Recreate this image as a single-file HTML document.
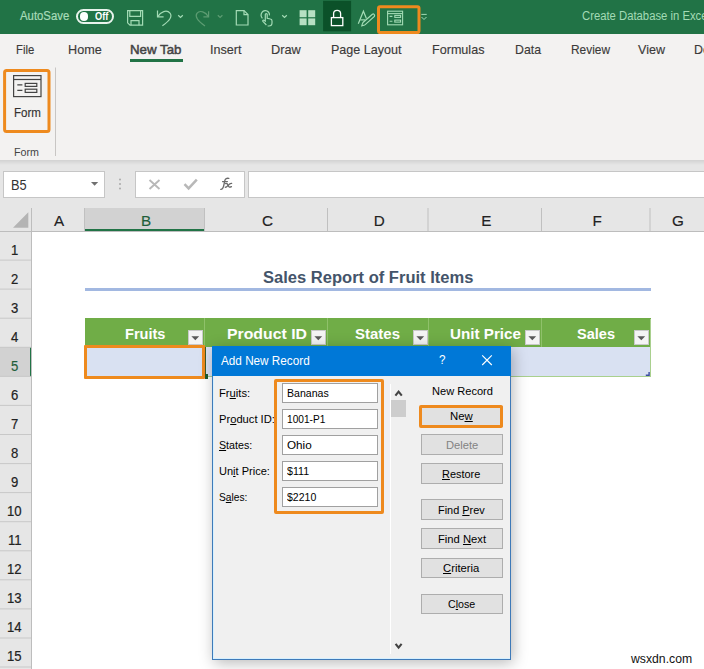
<!DOCTYPE html>
<html><head><meta charset="utf-8">
<style>
html,body{margin:0;padding:0;width:704px;height:669px;overflow:hidden;background:#fff}
body{position:relative;font-family:"Liberation Sans",sans-serif}
.r{position:absolute}
.t{position:absolute;white-space:nowrap;line-height:0;transform-origin:0 0}
u{text-decoration:underline;text-underline-offset:1px}
</style></head><body>
<div class="r" style="left:0px;top:0px;width:704px;height:34px;background:#217346"></div>
<div class="t" style="left:19.50px;top:16.27px;font-size:12.500px;color:#a8dcb9;font-weight:normal;transform:scaleX(0.9077);-webkit-text-stroke:0.2px #a8dcb9;">AutoSave</div>
<div class="r" style="left:76.2px;top:8.5px;width:34.1px;height:11.6px;border:2px solid #e8f3ec;border-radius:8px"></div>
<div class="r" style="left:79.6px;top:11.8px;width:8.8px;height:8.8px;background:#fff;border-radius:50%"></div>
<div class="t" style="left:95.00px;top:16.57px;font-size:10.465px;color:#fff;font-weight:bold;transform:scaleX(0.8815);">Off</div>
<svg class="r" style="left:0;top:0" width="704" height="34" viewBox="0 0 704 34" fill="none" stroke="#a3dbb5" stroke-width="1.2">
<!-- save -->
<path d="M127.6 10.6 H142.6 V25.2 H130 L127.6 22.8 Z"/>
<path d="M129.8 10.6 V16.3 H140.6 V10.6"/>
<path d="M131 25.2 V20.6 H139 V25.2"/>
<!-- undo -->
<path d="M157.5 10.5 V16.8 H163.6"/>
<path d="M157.8 16.6 C160.5 11.8 166.8 9.2 170 13.2 C172.6 16.5 169.8 20.6 162.4 25.8"/>
<path d="M178.2 15.2 L180.5 17.4 L182.8 15.2"/>
<!-- redo dim -->
<g stroke="#5c9c72">
<path d="M208.6 11.2 V16.8 H203.4"/>
<path d="M208.3 16.6 C205.8 12 199.8 9.6 196.9 13.4 C194.6 16.7 197.6 20.8 205 26"/>
<path d="M217.8 15.2 L220.1 17.4 L222.4 15.2"/>
</g>
<!-- new doc -->
<path d="M236.3 10.6 H244 L248 14.6 V25 H236.3 Z"/>
<path d="M244 10.6 V14.6 H248"/>
<!-- touch -->
<path d="M262.4 18.4 C261 16.8 260.8 14.2 262 12.4 C263.3 10.4 266.6 10 268.4 12 C269.3 13 269.6 14.2 269.4 15.4"/>
<path d="M266.4 25 L262.9 21.4 C262.3 20.7 263.1 19.8 263.9 20.2 L265.3 21.2 V14.6 C265.3 13.3 267.2 13.3 267.2 14.6 V18.3 L270.4 19 C271.5 19.2 272 20 272 21 V23 C272 24.8 270.6 26 268.8 26 H267.6"/>
<path d="M282.2 15.2 L284.5 17.4 L286.8 15.2"/>
<!-- A brush -->
<path d="M358.3 23.8 L363.4 11.2 L366.4 18.6"/>
<path d="M360.3 19.9 H365"/>
<path d="M372.4 14.3 C373.5 13.3 375.2 14.8 374.4 16.5 L365.2 24.6 C364.2 25.4 362.8 25.6 361.8 25.8 C362 24.8 362.4 23.6 363 22.5 Z"/>
<!-- overflow -->
<path d="M421.3 14.4 H426.7" stroke-width="1"/>
<path d="M421.5 17 L424 19.5 L426.5 17" stroke-width="1"/>
</svg>
<svg class="r" style="left:0;top:0" width="704" height="34" viewBox="0 0 704 34">
<g fill="#b7e0c3">
<rect x="299.6" y="10.2" width="7" height="7"/><rect x="308.2" y="10.2" width="7" height="7"/>
<rect x="299.6" y="18.4" width="7" height="6.8"/><rect x="308.2" y="18.4" width="7" height="6.8"/>
</g>
<rect x="323.1" y="0.8" width="28" height="30.5" fill="#0b5129"/>
<g fill="none" stroke="#fff" stroke-width="1.3">
<rect x="331.4" y="17.6" width="11.4" height="8"/>
<path d="M333.6 17.6 V13.6 C333.6 11.6 335 10.4 337.1 10.4 C339.2 10.4 340.6 11.6 340.6 13.6 V17.6"/>
</g>
<g fill="none" stroke="#a3dbb5" stroke-width="1.1">
<rect x="387.6" y="11.2" width="15" height="13.6"/>
<path d="M387.6 13.6 H402.6"/>
<path d="M389.6 16.4 H392.4 M389.6 21.2 H392.4"/>
<rect x="394.8" y="15.4" width="5.8" height="2"/>
<rect x="394.8" y="20.1" width="5.8" height="2"/>
</g>
<rect x="378.5" y="6.8" width="40.5" height="25.8" fill="none" stroke="#ee8a1e" stroke-width="3" rx="1.5"/>
</svg>
<div class="t" style="left:582.30px;top:15.59px;font-size:12.718px;color:#a3dbb5;font-weight:normal;transform:scaleX(0.8888);">Create Database in Excel</div>
<div class="r" style="left:0px;top:34px;width:704px;height:126px;background:#f3f2f1"></div>
<div class="t" style="left:15.50px;top:49.59px;font-size:13.445px;color:#3b3a39;font-weight:normal;transform:scaleX(0.8421);-webkit-text-stroke:0.15px #3b3a39;">File</div>
<div class="t" style="left:67.50px;top:49.59px;font-size:13.445px;color:#3b3a39;font-weight:normal;transform:scaleX(0.9407);-webkit-text-stroke:0.15px #3b3a39;">Home</div>
<div class="t" style="left:210.25px;top:49.59px;font-size:13.445px;color:#3b3a39;font-weight:normal;transform:scaleX(0.9364);-webkit-text-stroke:0.15px #3b3a39;">Insert</div>
<div class="t" style="left:271.25px;top:49.59px;font-size:13.445px;color:#3b3a39;font-weight:normal;transform:scaleX(0.9479);-webkit-text-stroke:0.15px #3b3a39;">Draw</div>
<div class="t" style="left:331.25px;top:49.59px;font-size:13.445px;color:#3b3a39;font-weight:normal;transform:scaleX(0.9334);-webkit-text-stroke:0.15px #3b3a39;">Page Layout</div>
<div class="t" style="left:432.00px;top:49.59px;font-size:13.445px;color:#3b3a39;font-weight:normal;transform:scaleX(0.9366);-webkit-text-stroke:0.15px #3b3a39;">Formulas</div>
<div class="t" style="left:514.50px;top:49.59px;font-size:13.445px;color:#3b3a39;font-weight:normal;transform:scaleX(0.9151);-webkit-text-stroke:0.15px #3b3a39;">Data</div>
<div class="t" style="left:570.50px;top:49.59px;font-size:13.445px;color:#3b3a39;font-weight:normal;transform:scaleX(0.8843);-webkit-text-stroke:0.15px #3b3a39;">Review</div>
<div class="t" style="left:638.00px;top:49.59px;font-size:13.445px;color:#3b3a39;font-weight:normal;transform:scaleX(0.9339);-webkit-text-stroke:0.15px #3b3a39;">View</div>
<div class="t" style="left:693.50px;top:49.59px;font-size:13.445px;color:#3b3a39;font-weight:normal;transform:scaleX(0.9216);-webkit-text-stroke:0.15px #3b3a39;">Developer</div>
<div class="t" style="left:130.00px;top:49.59px;font-size:13.445px;color:#444;font-weight:normal;transform:scaleX(0.9887);-webkit-text-stroke:0.5px #444;">New Tab</div>
<div class="r" style="left:130px;top:59px;width:53px;height:3px;background:#217346"></div>
<svg class="r" style="left:0;top:34px" width="80" height="130" viewBox="0 34 80 130">
<g fill="none" stroke="#444" stroke-width="1.2">
<rect x="13.6" y="75.6" width="27.4" height="21"/>
<path d="M13.6 79.5 H41"/>
<path d="M17.3 84.8 H22.4 M17.3 90.4 H22.4"/>
<rect x="25.2" y="83.4" width="11.6" height="3"/>
<rect x="25.2" y="89.2" width="11.6" height="3.2"/>
</g>
<rect x="4.6" y="70.6" width="44.4" height="61" fill="none" stroke="#ee8a1e" stroke-width="3" rx="2"/>
<path d="M55.5 67.5 V156" stroke="#c8c6c4" stroke-width="1"/>
</svg>
<div class="t" style="left:13.50px;top:112.96px;font-size:13.082px;color:#323130;font-weight:normal;transform:scaleX(0.8834);-webkit-text-stroke:0.15px #323130;">Form</div>
<div class="t" style="left:13.50px;top:151.82px;font-size:11.192px;color:#444;font-weight:normal;transform:scaleX(0.9568);">Form</div>
<div class="r" style="left:0px;top:160px;width:704px;height:49px;background:#e6e6e6"></div>
<div class="r" style="left:0px;top:160px;width:704px;height:5px;background:linear-gradient(#d2d2d2,#e6e6e6)"></div>
<div class="r" style="left:3px;top:171px;width:101.5px;height:27px;background:#fff;border:1px solid #c6c6c6;box-sizing:border-box"></div>
<div class="t" style="left:10.80px;top:184.66px;font-size:14.826px;color:#333;font-weight:normal;transform:scaleX(0.8644);">B5</div>
<svg class="r" style="left:88px;top:180px" width="12" height="8"><path d="M3 2 H10.2 L6.6 5.8 Z" fill="#707070"/></svg>
<svg class="r" style="left:117px;top:177px" width="6" height="14"><circle cx="3" cy="2.5" r="1" fill="#aaa"/><circle cx="3" cy="7" r="1" fill="#aaa"/><circle cx="3" cy="11.5" r="1" fill="#aaa"/></svg>
<div class="r" style="left:135px;top:171px;width:110px;height:27px;background:#fff;border:1px solid #c6c6c6;box-sizing:border-box"></div>
<svg class="r" style="left:135px;top:171px" width="110" height="27" viewBox="135 171 110 27">
<path d="M149.5 180 L159.5 189 M159.5 180 L149.5 189" stroke="#b8b8b8" stroke-width="1.9" fill="none"/>
<path d="M184.5 184.2 L188.6 188.4 L196.8 179.6" stroke="#b8b8b8" stroke-width="2.5" fill="none"/>
</svg>
<svg class="r" style="left:215px;top:174px" width="22" height="20" viewBox="215 174 22 20"><g fill="none" stroke="#6a6a6a" stroke-width="1.35" stroke-linecap="round"><path d="M220.8 189.4 C222.6 189.2 223.4 187.4 223.9 184.8 L224.8 180.6 C225.3 178.6 226.8 177.9 228.8 178.4"/><path d="M222.6 181.6 H227.4"/><path d="M225.6 183.6 C227 183 227.6 184.2 228.2 185.6 C228.8 187.2 229.8 187.6 231.4 186.6"/><path d="M231.6 183.4 C230.4 183.2 229.4 184 227.9 185.6 C226.8 186.8 226 187.4 225.3 187.2"/></g></svg>
<div class="r" style="left:248px;top:171px;width:470px;height:27px;background:#fff;border:1px solid #c6c6c6;box-sizing:border-box"></div>
<div class="r" style="left:0px;top:208px;width:704px;height:461px;background:#fff"></div>
<div class="r" style="left:0px;top:208px;width:704px;height:23px;background:#e6e6e6"></div>
<div class="r" style="left:0px;top:231px;width:31px;height:438px;background:#e6e6e6"></div>
<div class="r" style="left:85px;top:208px;width:120px;height:23px;background:#d2d2d2"></div>
<div class="r" style="left:85px;top:229px;width:120px;height:2px;background:#217346"></div>
<div class="r" style="left:0px;top:347.28px;width:31px;height:29px;background:#d2d2d2"></div>
<div class="r" style="left:30px;top:347.28px;width:2px;height:29.5px;background:#217346"></div>
<svg class="r" style="left:0;top:0" width="704" height="669" viewBox="0 0 704 669"><path d="M0 231.5 H704" stroke="#bdbdbd" stroke-width="1"/><path d="M31.5 208 V669" stroke="#bdbdbd" stroke-width="1"/><path d="M84.5 208 V231" stroke="#c0c0c0" stroke-width="1"/><path d="M204.5 208 V231" stroke="#c0c0c0" stroke-width="1"/><path d="M327.5 208 V231" stroke="#c0c0c0" stroke-width="1"/><path d="M428.0 208 V231" stroke="#c0c0c0" stroke-width="1"/><path d="M541.5 208 V231" stroke="#c0c0c0" stroke-width="1"/><path d="M650.0 208 V231" stroke="#c0c0c0" stroke-width="1"/><path d="M0 260.1 H31" stroke="#c8c8c8" stroke-width="1"/><path d="M0 289.1 H31" stroke="#c8c8c8" stroke-width="1"/><path d="M0 318.2 H31" stroke="#c8c8c8" stroke-width="1"/><path d="M0 347.3 H31" stroke="#c8c8c8" stroke-width="1"/><path d="M0 376.4 H31" stroke="#c8c8c8" stroke-width="1"/><path d="M0 405.4 H31" stroke="#c8c8c8" stroke-width="1"/><path d="M0 434.5 H31" stroke="#c8c8c8" stroke-width="1"/><path d="M0 463.6 H31" stroke="#c8c8c8" stroke-width="1"/><path d="M0 492.6 H31" stroke="#c8c8c8" stroke-width="1"/><path d="M0 521.7 H31" stroke="#c8c8c8" stroke-width="1"/><path d="M0 550.8 H31" stroke="#c8c8c8" stroke-width="1"/><path d="M0 579.8 H31" stroke="#c8c8c8" stroke-width="1"/><path d="M0 608.9 H31" stroke="#c8c8c8" stroke-width="1"/><path d="M0 638.0 H31" stroke="#c8c8c8" stroke-width="1"/><path d="M0 667.0 H31" stroke="#c8c8c8" stroke-width="1"/><path d="M13 227.8 L28.3 227.8 L28.3 212.3 Z" fill="#b4b4b4"/></svg>
<div class="t" style="left:53.91px;top:220.71px;font-size:15.262px;color:#222;font-weight:normal;-webkit-text-stroke:0.15px currentColor;">A</div>
<div class="t" style="left:140.91px;top:220.71px;font-size:15.262px;color:#1f5f3a;font-weight:normal;-webkit-text-stroke:0.15px currentColor;">B</div>
<div class="t" style="left:261.99px;top:220.71px;font-size:15.262px;color:#222;font-weight:normal;-webkit-text-stroke:0.15px currentColor;">C</div>
<div class="t" style="left:373.74px;top:220.71px;font-size:15.262px;color:#222;font-weight:normal;-webkit-text-stroke:0.15px currentColor;">D</div>
<div class="t" style="left:481.16px;top:220.71px;font-size:15.262px;color:#222;font-weight:normal;-webkit-text-stroke:0.15px currentColor;">E</div>
<div class="t" style="left:592.59px;top:220.71px;font-size:15.262px;color:#222;font-weight:normal;-webkit-text-stroke:0.15px currentColor;">F</div>
<div class="t" style="left:672.07px;top:220.71px;font-size:15.262px;color:#222;font-weight:normal;-webkit-text-stroke:0.15px currentColor;">G</div>
<div class="t" style="left:10.95px;top:249.51px;font-size:15.262px;color:#222;font-weight:normal;transform:scaleX(0.8600);-webkit-text-stroke:0.2px currentColor;">1</div>
<div class="t" style="left:10.95px;top:278.58px;font-size:15.262px;color:#222;font-weight:normal;transform:scaleX(0.8600);-webkit-text-stroke:0.2px currentColor;">2</div>
<div class="t" style="left:10.95px;top:307.65px;font-size:15.262px;color:#222;font-weight:normal;transform:scaleX(0.8600);-webkit-text-stroke:0.2px currentColor;">3</div>
<div class="t" style="left:10.95px;top:336.72px;font-size:15.262px;color:#222;font-weight:normal;transform:scaleX(0.8600);-webkit-text-stroke:0.2px currentColor;">4</div>
<div class="t" style="left:10.95px;top:365.79px;font-size:15.262px;color:#1f5f3a;font-weight:normal;transform:scaleX(0.8600);-webkit-text-stroke:0.2px currentColor;">5</div>
<div class="t" style="left:10.95px;top:394.86px;font-size:15.262px;color:#222;font-weight:normal;transform:scaleX(0.8600);-webkit-text-stroke:0.2px currentColor;">6</div>
<div class="t" style="left:10.95px;top:423.93px;font-size:15.262px;color:#222;font-weight:normal;transform:scaleX(0.8600);-webkit-text-stroke:0.2px currentColor;">7</div>
<div class="t" style="left:10.95px;top:453.00px;font-size:15.262px;color:#222;font-weight:normal;transform:scaleX(0.8600);-webkit-text-stroke:0.2px currentColor;">8</div>
<div class="t" style="left:10.95px;top:482.07px;font-size:15.262px;color:#222;font-weight:normal;transform:scaleX(0.8600);-webkit-text-stroke:0.2px currentColor;">9</div>
<div class="t" style="left:7.31px;top:511.14px;font-size:15.262px;color:#222;font-weight:normal;transform:scaleX(0.8600);-webkit-text-stroke:0.2px currentColor;">10</div>
<div class="t" style="left:7.79px;top:540.21px;font-size:15.262px;color:#222;font-weight:normal;transform:scaleX(0.8600);-webkit-text-stroke:0.2px currentColor;">11</div>
<div class="t" style="left:7.31px;top:569.28px;font-size:15.262px;color:#222;font-weight:normal;transform:scaleX(0.8600);-webkit-text-stroke:0.2px currentColor;">12</div>
<div class="t" style="left:7.31px;top:598.35px;font-size:15.262px;color:#222;font-weight:normal;transform:scaleX(0.8600);-webkit-text-stroke:0.2px currentColor;">13</div>
<div class="t" style="left:7.31px;top:627.42px;font-size:15.262px;color:#222;font-weight:normal;transform:scaleX(0.8600);-webkit-text-stroke:0.2px currentColor;">14</div>
<div class="t" style="left:7.31px;top:656.49px;font-size:15.262px;color:#222;font-weight:normal;transform:scaleX(0.8600);-webkit-text-stroke:0.2px currentColor;">15</div>
<div class="t" style="left:263.05px;top:276.81px;font-size:16.425px;color:#44546a;font-weight:bold;transform:scaleX(1.0077);">Sales Report of Fruit Items</div>
<div class="r" style="left:85px;top:288px;width:565.5px;height:3px;background:#a2b8e1"></div>
<div class="r" style="left:85px;top:318px;width:565.5px;height:29px;background:#70ad47"></div>
<div class="r" style="left:204px;top:318px;width:1px;height:29px;background:#8fc16a"></div>
<div class="r" style="left:327px;top:318px;width:1px;height:29px;background:#8fc16a"></div>
<div class="r" style="left:428px;top:318px;width:1px;height:29px;background:#8fc16a"></div>
<div class="r" style="left:541px;top:318px;width:1px;height:29px;background:#8fc16a"></div>
<div class="r" style="left:85px;top:347px;width:565.5px;height:29.5px;background:#d9e1f2"></div>
<div class="r" style="left:649.5px;top:318.5px;width:1px;height:58px;background:#a9d08e"></div>
<div class="r" style="left:85px;top:375.5px;width:565.5px;height:1px;background:#a9d08e"></div>
<div class="t" style="left:125.45px;top:333.86px;font-size:15.407px;color:#fff;font-weight:bold;transform:scaleX(0.9467);">Fruits</div>
<div class="t" style="left:226.50px;top:333.86px;font-size:15.407px;color:#fff;font-weight:bold;transform:scaleX(1.0275);">Product ID</div>
<div class="t" style="left:355.00px;top:333.86px;font-size:15.407px;color:#fff;font-weight:bold;transform:scaleX(0.9735);">States</div>
<div class="t" style="left:450.00px;top:333.86px;font-size:15.407px;color:#fff;font-weight:bold;transform:scaleX(0.9877);">Unit Price</div>
<div class="t" style="left:577.00px;top:333.86px;font-size:15.407px;color:#fff;font-weight:bold;transform:scaleX(0.9442);">Sales</div>
<div class="r" style="left:188px;top:329.8px;width:14.8px;height:15.2px;background:#f4f4f4;border:1px solid #c9c9c9;box-sizing:border-box"></div>
<svg class="r" style="left:188px;top:329.8px" width="15" height="15"><path d="M3.4 6.2 H11.2 L7.3 10.2 Z" fill="#595959"/></svg>
<div class="r" style="left:311px;top:329.8px;width:14.8px;height:15.2px;background:#f4f4f4;border:1px solid #c9c9c9;box-sizing:border-box"></div>
<svg class="r" style="left:311px;top:329.8px" width="15" height="15"><path d="M3.4 6.2 H11.2 L7.3 10.2 Z" fill="#595959"/></svg>
<div class="r" style="left:413px;top:329.8px;width:14.8px;height:15.2px;background:#f4f4f4;border:1px solid #c9c9c9;box-sizing:border-box"></div>
<svg class="r" style="left:413px;top:329.8px" width="15" height="15"><path d="M3.4 6.2 H11.2 L7.3 10.2 Z" fill="#595959"/></svg>
<div class="r" style="left:525px;top:329.8px;width:14.8px;height:15.2px;background:#f4f4f4;border:1px solid #c9c9c9;box-sizing:border-box"></div>
<svg class="r" style="left:525px;top:329.8px" width="15" height="15"><path d="M3.4 6.2 H11.2 L7.3 10.2 Z" fill="#595959"/></svg>
<div class="r" style="left:634px;top:329.8px;width:14.8px;height:15.2px;background:#f4f4f4;border:1px solid #c9c9c9;box-sizing:border-box"></div>
<svg class="r" style="left:634px;top:329.8px" width="15" height="15"><path d="M3.4 6.2 H11.2 L7.3 10.2 Z" fill="#595959"/></svg>
<svg class="r" style="left:644px;top:370px" width="8" height="8"><path d="M5.8 2 V6 H1.8 V4.6 H4.4 V2 Z" fill="#3a4ca0"/></svg>
<div class="r" style="left:84px;top:345px;width:121px;height:34px;border:3px solid #ee8a1e;box-sizing:border-box;border-radius:1px"></div>
<div class="r" style="left:205px;top:347px;width:1px;height:27px;background:#3d5a2a"></div>
<div class="r" style="left:205px;top:374px;width:2.5px;height:4.5px;background:#1e5a2f"></div>
<div class="r" style="left:212px;top:345.5px;width:298.5px;height:314px;background:#f0f0f0;border:1px solid #3f7ab8;box-sizing:border-box;box-shadow:inset 1px 0 0 #d6f0ff, inset 0 -1px 0 #d6f0ff, 2px 3px 14px rgba(0,0,0,0.28)"></div>
<div class="r" style="left:212px;top:345.5px;width:298.5px;height:30.5px;background:#0078d7"></div>
<div class="t" style="left:221.20px;top:360.56px;font-size:13.372px;color:#fff;font-weight:normal;transform:scaleX(0.8780);">Add New Record</div>
<div class="t" style="left:438.50px;top:360.26px;font-size:13.082px;color:#fff;font-weight:normal;transform:scaleX(0.8921);">?</div>
<svg class="r" style="left:480px;top:353px" width="14" height="14"><path d="M2.2 2.4 L11.8 12 M11.8 2.4 L2.2 12" stroke="#fff" stroke-width="1.15"/></svg>
<div class="t" style="left:219.3px;top:392.82px;font-size:11.483px;color:#000;transform:scaleX(0.9798)">Fr<u>u</u>its:</div>
<div class="r" style="left:282px;top:383px;width:95.5px;height:20px;background:#fff;border:1px solid #a0a0a0;box-sizing:border-box"></div>
<div class="t" style="left:286.60px;top:392.82px;font-size:11.483px;color:#000;font-weight:normal;transform:scaleX(0.9207);">Bananas</div>
<div class="t" style="left:219.3px;top:418.82px;font-size:11.483px;color:#000;transform:scaleX(0.9735)">Pr<u>o</u>duct ID:</div>
<div class="r" style="left:282px;top:409px;width:95.5px;height:20px;background:#fff;border:1px solid #a0a0a0;box-sizing:border-box"></div>
<div class="t" style="left:286.60px;top:418.82px;font-size:11.483px;color:#000;font-weight:normal;transform:scaleX(0.8832);">1001-P1</div>
<div class="t" style="left:219.3px;top:444.82px;font-size:11.483px;color:#000;transform:scaleX(0.9302)"><u>S</u>tates:</div>
<div class="r" style="left:282px;top:435px;width:95.5px;height:20px;background:#fff;border:1px solid #a0a0a0;box-sizing:border-box"></div>
<div class="t" style="left:286.60px;top:444.82px;font-size:11.483px;color:#000;font-weight:normal;transform:scaleX(1.0209);">Ohio</div>
<div class="t" style="left:219.3px;top:470.82px;font-size:11.483px;color:#000;transform:scaleX(0.9615)">Un<u>i</u>t Price:</div>
<div class="r" style="left:282px;top:461px;width:95.5px;height:20px;background:#fff;border:1px solid #a0a0a0;box-sizing:border-box"></div>
<div class="t" style="left:286.60px;top:470.82px;font-size:11.483px;color:#000;font-weight:normal;transform:scaleX(0.9297);">$111</div>
<div class="t" style="left:219.3px;top:496.82px;font-size:11.483px;color:#000;transform:scaleX(0.8885)">S<u>a</u>les:</div>
<div class="r" style="left:282px;top:487px;width:95.5px;height:20px;background:#fff;border:1px solid #a0a0a0;box-sizing:border-box"></div>
<div class="t" style="left:286.60px;top:496.82px;font-size:11.483px;color:#000;font-weight:normal;transform:scaleX(0.9162);">$2210</div>
<div class="r" style="left:273.8px;top:379px;width:110.7px;height:134.8px;border:3px solid #ee8a1e;box-sizing:border-box;border-radius:2px"></div>
<div class="r" style="left:390px;top:383.5px;width:1px;height:270px;background:#fff"></div>
<svg class="r" style="left:392px;top:386px" width="14" height="14"><path d="M3.4 9.6 L6.6 5.6 L9.8 9.6" stroke="#444" stroke-width="2.1" fill="none"/></svg>
<div class="r" style="left:391.2px;top:400px;width:14.8px;height:16.6px;background:#cdcdcd"></div>
<svg class="r" style="left:391px;top:639px" width="14" height="14"><path d="M4.6 4.8 L7.6 8.6 L10.6 4.8" stroke="#444" stroke-width="2.1" fill="none"/></svg>
<div class="t" style="left:431.50px;top:390.82px;font-size:11.483px;color:#000;font-weight:normal;transform:scaleX(0.9657);">New Record</div>
<div class="r" style="left:421px;top:434px;width:82px;height:20.5px;background:#e1e1e1;border:1px solid #adadad;box-sizing:border-box"></div>
<div class="t" style="left:445.5px;top:444.82px;font-size:11.483px;color:#838383;transform:scaleX(0.9746)">Delete</div>
<div class="r" style="left:421px;top:463px;width:82px;height:20.5px;background:#e1e1e1;border:1px solid #adadad;box-sizing:border-box"></div>
<div class="t" style="left:442.3px;top:473.82px;font-size:11.483px;color:#000;transform:scaleX(0.9511)"><u>R</u>estore</div>
<div class="r" style="left:421px;top:499.4px;width:82px;height:20.5px;background:#e1e1e1;border:1px solid #adadad;box-sizing:border-box"></div>
<div class="t" style="left:438.4px;top:510.22px;font-size:11.483px;color:#000;transform:scaleX(0.9510)">Find <u>P</u>rev</div>
<div class="r" style="left:421px;top:528.3px;width:82px;height:20.5px;background:#e1e1e1;border:1px solid #adadad;box-sizing:border-box"></div>
<div class="t" style="left:437.5px;top:539.12px;font-size:11.483px;color:#000;transform:scaleX(0.9794)">Find <u>N</u>ext</div>
<div class="r" style="left:421px;top:557.5px;width:82px;height:20.5px;background:#e1e1e1;border:1px solid #adadad;box-sizing:border-box"></div>
<div class="t" style="left:443.4px;top:568.32px;font-size:11.483px;color:#000;transform:scaleX(0.9822)"><u>C</u>riteria</div>
<div class="r" style="left:421px;top:593.6px;width:82px;height:20.5px;background:#e1e1e1;border:1px solid #adadad;box-sizing:border-box"></div>
<div class="t" style="left:448.3px;top:604.42px;font-size:11.483px;color:#000;transform:scaleX(0.9285)">C<u>l</u>ose</div>
<div class="r" style="left:421px;top:405.5px;width:82px;height:21.5px;background:#e1e1e1;border:1px solid #adadad;box-sizing:border-box"></div>
<div class="t" style="left:450.4px;top:415.92px;font-size:11.483px;color:#000;transform:scaleX(0.9911)">Ne<u>w</u></div>
<div class="r" style="left:419.3px;top:404.5px;width:83.7px;height:23.3px;border:3px solid #ee8a1e;box-sizing:border-box;border-radius:2px"></div>
<div class="t" style="left:631.00px;top:658.76px;font-size:11.934px;color:#111;font-weight:normal;transform:scaleX(1.0256);">wsxdn.com</div>
</body></html>
